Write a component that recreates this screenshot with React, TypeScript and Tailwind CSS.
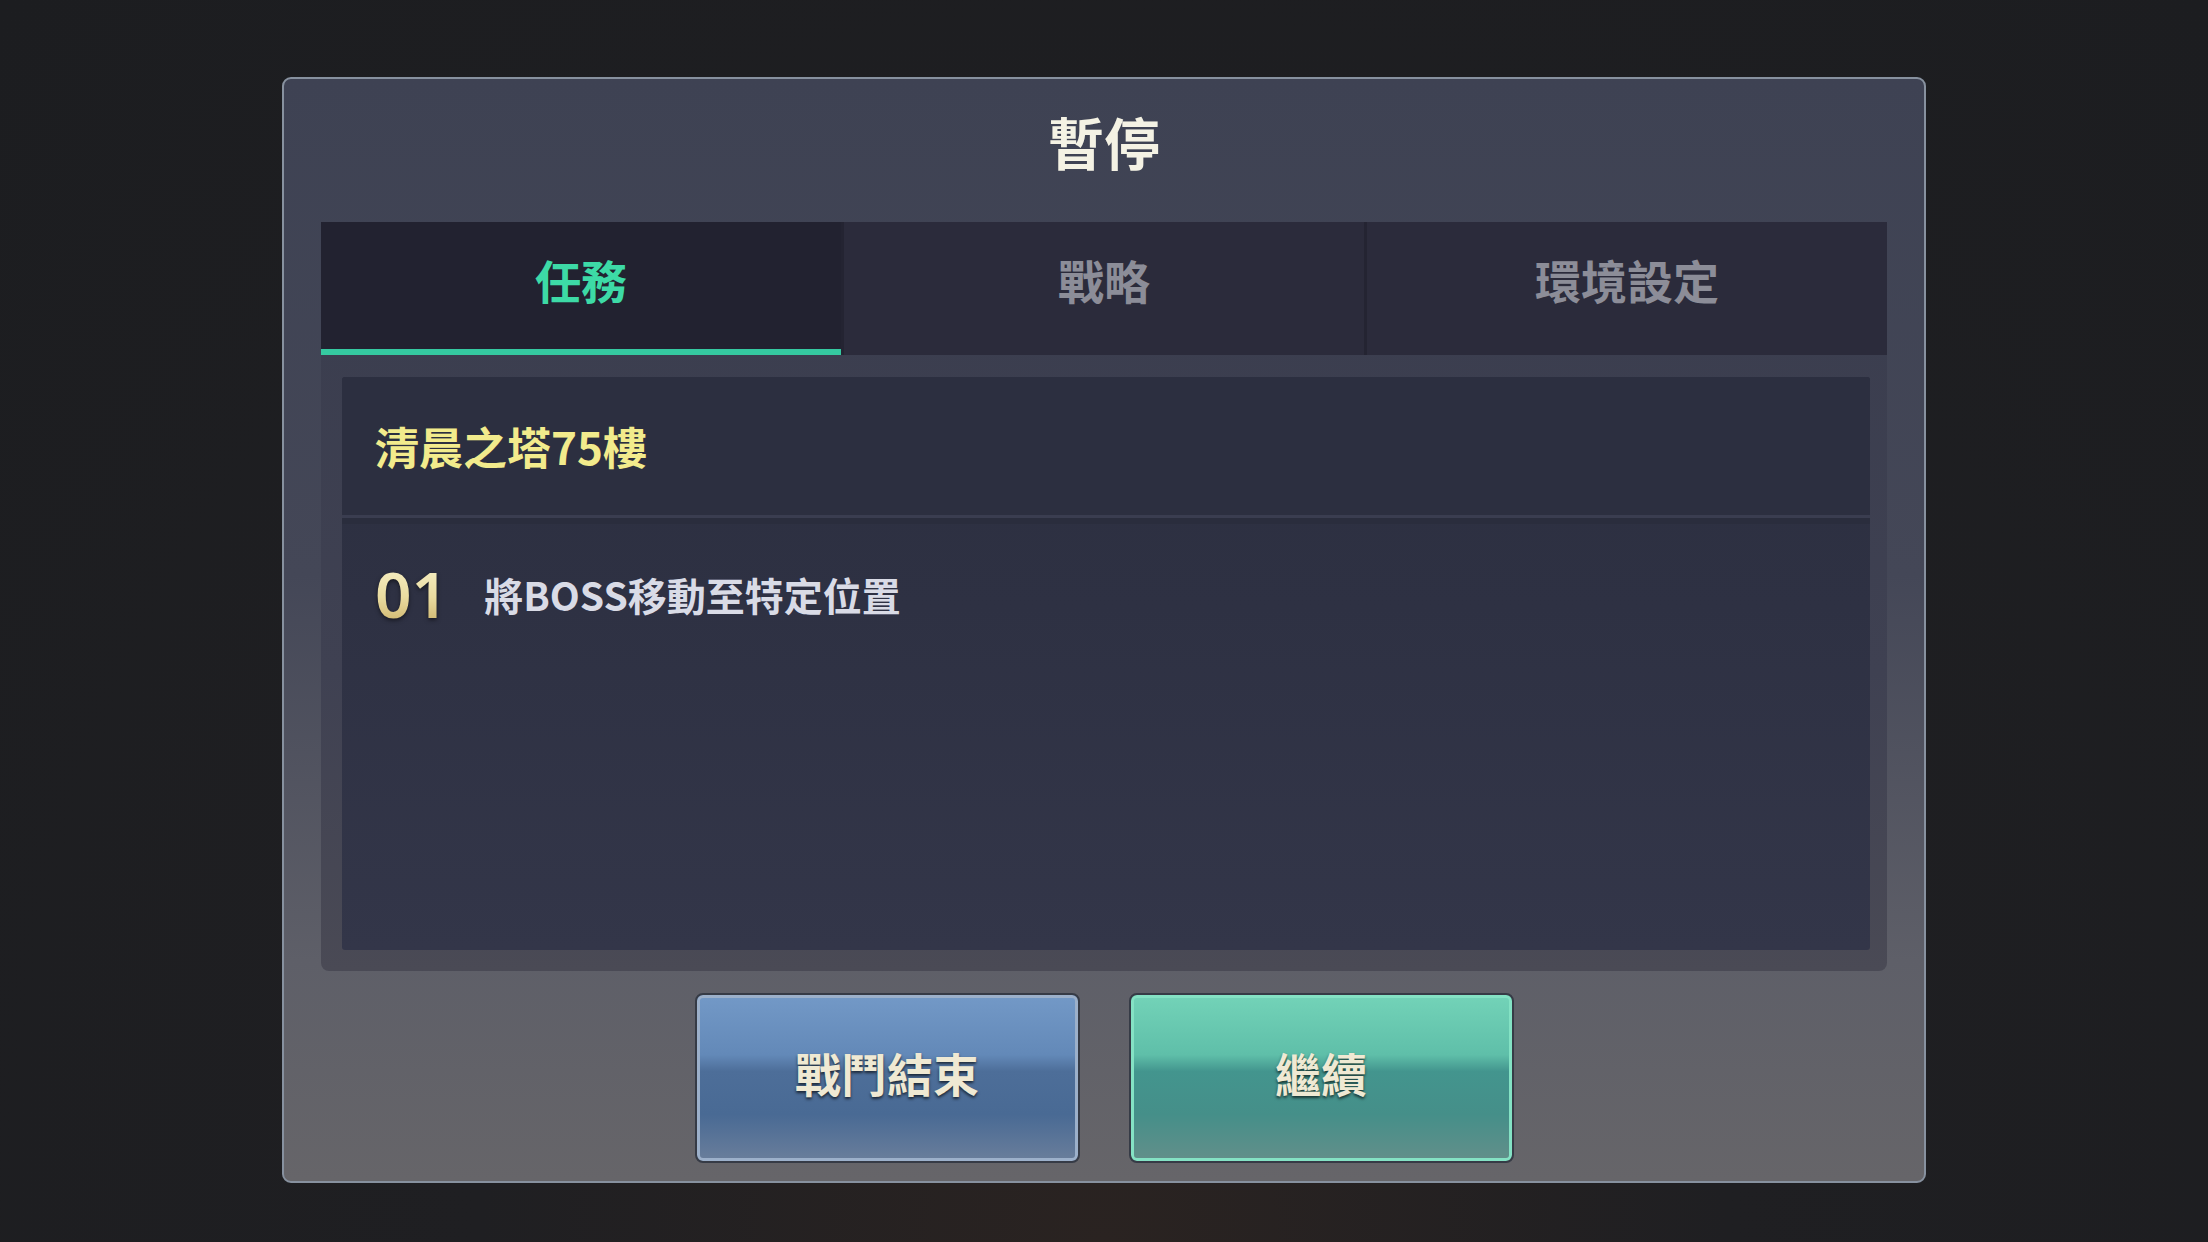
import React from 'react'

const CJK = { fontFamily: '"Noto Sans CJK TC", "Noto Sans", sans-serif' }

function Tab({ label, active }: { label: string; active?: boolean }) {
  return (
    <div
      className={`relative flex-1 flex items-center justify-center pb-[20px] ${
        active ? 'bg-[#222230]' : 'bg-[#2b2b3b]'
      }`}
    >
      <span
        className={`text-[46px] font-bold leading-none ${active ? 'text-[#3ddaa6]' : 'text-[#8c8d98]'}`}
      >
        {label}
      </span>
      {active && <div className="absolute left-0 right-0 bottom-0 h-[6px] bg-[#35c9a0]" />}
    </div>
  )
}

function GameButton({ label, tone }: { label: string; tone: 'blue' | 'green' }) {
  const skin =
    tone === 'blue'
      ? 'bg-[linear-gradient(180deg,#7399c7_0%,#6389b8_36%,#4d6e99_46%,#496a94_72%,#6a7e9b_100%)] shadow-[inset_0_0_0_3px_#9cb0ca]'
      : 'bg-[linear-gradient(180deg,#73d3b8_0%,#5fbfa9_36%,#43958e_46%,#458f89_72%,#638f8a_100%)] shadow-[inset_0_0_0_3px_#84e2c4]'
  return (
    <button
      className={`w-[385px] h-[170px] rounded-[8px] border-2 border-[#363b46] flex items-center justify-center pb-[12px] ${skin}`}
    >
      <span className="text-[46px] font-bold leading-none text-[#efe9d3] [text-shadow:0_2px_3px_rgba(0,0,0,0.65)]">
        {label}
      </span>
    </button>
  )
}

export default function App() {
  return (
    <div
      className="w-[2208px] h-[1242px] overflow-hidden bg-[radial-gradient(ellipse_at_50%_100%,#2a2321_0%,#1f1f22_40%,#1c1d20_100%)] pt-[77px]"
      style={CJK}
    >
      <div className="mx-auto w-[1644px] h-[1106px] rounded-[9px] border-2 border-[#87919f] bg-[linear-gradient(180deg,#3e4253_0%,#444757_45%,#5e5f68_80%,#666569_100%)] flex flex-col">
        {/* title */}
        <div className="h-[143px] flex items-center justify-center pb-[19px]">
          <h1 className="text-[56px] font-bold leading-none text-[#f4f2e4]">暫停</h1>
        </div>

        <div className="px-[37px]">
          <div className="rounded-b-[8px] bg-[linear-gradient(180deg,#3a3d4e_0%,#3f4152_60%,#4a4a55_100%)]">
            {/* tabs */}
            <div className="h-[133px] flex gap-[3px] bg-[#242432]">
              <Tab label="任務" active />
              <Tab label="戰略" />
              <Tab label="環境設定" />
            </div>

            {/* mission panel */}
            <div className="pt-[22px] pb-[21px] pl-[21px] pr-[17px]">
              <div className="h-[573px] rounded-[3px] bg-[linear-gradient(180deg,#2c2f40_0%,#2e3143_40%,#333649_100%)] flex flex-col">
                <div className="h-[138px] flex items-center pl-[33px] bg-[#2c2f40] rounded-t-[3px]">
                  <span className="text-[44px] font-bold leading-none text-[#f2eb8c]">清晨之塔75樓</span>
                </div>
                <div className="h-[9px] bg-[#2a2d3d] border-t-[3px] border-[#3a3d50]" />
                <div className="h-[140px] flex items-center pl-[33px] gap-[36px]">
                  <span
                    className="text-[64px] font-semibold leading-none bg-[linear-gradient(180deg,#f8f1c8_0%,#e9dba0_55%,#cdb36a_100%)] bg-clip-text text-transparent [filter:drop-shadow(0_2px_2px_rgba(0,0,0,0.5))]"
                    style={{ fontFamily: '"Noto Sans", "Open Sans", sans-serif' }}
                  >
                    01
                  </span>
                  <span className="text-[39px] font-bold leading-none text-[#d9dbe6]">將BOSS移動至特定位置</span>
                </div>
              </div>
            </div>
          </div>
        </div>

        {/* actions */}
        <div className="flex justify-center gap-[49px] pt-[22px]">
          <GameButton label="戰鬥結束" tone="blue" />
          <GameButton label="繼續" tone="green" />
        </div>
      </div>
    </div>
  )
}
